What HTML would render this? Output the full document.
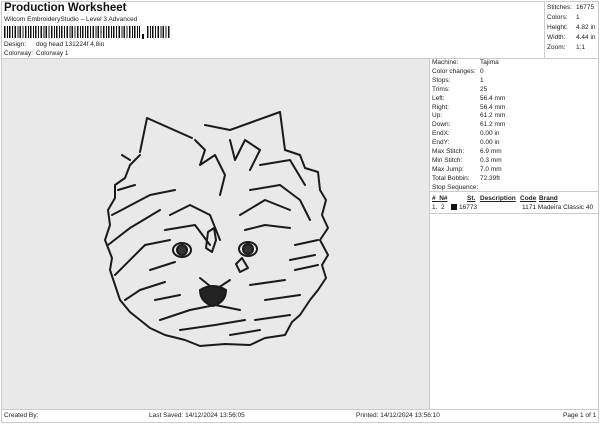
<!DOCTYPE html>
<html><head><meta charset="utf-8"><style>
*{margin:0;padding:0;box-sizing:border-box}
body{width:600px;height:424px;background:#fff;font-family:"Liberation Sans",sans-serif;color:#222;position:relative;overflow:hidden;font-size:7px}
.a{position:absolute;white-space:nowrap}
.f{border:1px solid #ccc;position:absolute}
</style></head><body>
<div class="f" style="left:1px;top:1px;width:598px;height:422px"></div>
<div class="a" style="left:4px;top:2px;font-size:11.5px;font-weight:bold;color:#111">Production Worksheet</div>
<div class="a" style="left:4px;top:16px;font-size:6.5px">Wilcom EmbroideryStudio – Level 3 Advanced</div>
<div class="a" style="left:4px;top:26px;width:136px;height:12px;background:repeating-linear-gradient(90deg,#111 0 1.5px,#fff 1.5px 3px,#111 3px 4px,#fff 4px 5.2px)"></div>
<div class="a" style="left:142px;top:34px;width:2px;height:5px;background:#111"></div>
<div class="a" style="left:147px;top:26px;width:24px;height:12px;background:repeating-linear-gradient(90deg,#111 0 1.5px,#fff 1.5px 3px,#111 3px 4px,#fff 4px 5.2px)"></div>
<div class="a" style="left:4px;top:41px;font-size:6.5px">Design:</div>
<div class="a" style="left:36px;top:41px;font-size:6.5px">dog head 131224f 4,8in</div>
<div class="a" style="left:4px;top:50px;font-size:6.5px">Colorway:</div>
<div class="a" style="left:36px;top:50px;font-size:6.5px">Colorway 1</div>
<div class="a" style="left:544px;top:1px;width:1px;height:57px;background:#ccc"></div>
<div class="a" style="left:547px;top:3px;font-size:6.5px;line-height:10px">Stitches:<br>Colors:<br>Height:<br>Width:<br>Zoom:</div>
<div class="a" style="left:576px;top:3px;font-size:6.5px;line-height:10px">16775<br>1<br>4.82 in<br>4.44 in<br>1:1</div>
<div class="a" style="left:1px;top:58px;width:598px;height:1px;background:#ccc"></div>
<div class="a" style="left:2px;top:59px;width:427px;height:350px;background:#e9e9e9"></div>
<div class="a" style="left:429px;top:59px;width:1px;height:350px;background:#ccc"></div>
<div class="a" style="left:432px;top:59px;font-size:6.5px;line-height:8.9px">Machine:<br>Color changes:<br>Stops:<br>Trims:<br>Left:<br>Right:<br>Up:<br>Down:<br>EndX:<br>EndY:<br>Max Stitch:<br>Min Stitch:<br>Max Jump:<br>Total Bobbin:<br>Stop Sequence:</div>
<div class="a" style="left:480px;top:59px;font-size:6.5px;line-height:8.9px">Tajima<br>0<br>1<br>25<br>56.4 mm<br>56.4 mm<br>61.2 mm<br>61.2 mm<br>0.00 in<br>0.00 in<br>6.9 mm<br>0.3 mm<br>7.0 mm<br>72.39ft</div>
<div class="a" style="left:430px;top:191px;width:169px;height:1px;background:#ccc"></div>
<div class="a" style="left:432px;top:195px;font-size:6.5px;font-weight:bold;text-decoration:underline">#&nbsp; N#</div>
<div class="a" style="left:467px;top:195px;font-size:6.5px;font-weight:bold;text-decoration:underline">St.</div>
<div class="a" style="left:480px;top:195px;font-size:6.5px;font-weight:bold;text-decoration:underline">Description</div>
<div class="a" style="left:520px;top:195px;font-size:6.5px;font-weight:bold;text-decoration:underline">Code</div>
<div class="a" style="left:539px;top:195px;font-size:6.5px;font-weight:bold;text-decoration:underline">Brand</div>
<div class="a" style="left:432px;top:204px;font-size:6.5px">1.&nbsp; 2</div>
<div class="a" style="left:451px;top:204px;width:6px;height:6px;background:#111"></div>
<div class="a" style="left:459px;top:204px;font-size:6.5px">16773</div>
<div class="a" style="left:522px;top:204px;font-size:6.5px">1171 Madeira Classic 40</div>
<div class="a" style="left:430px;top:213px;width:169px;height:1px;background:#ccc"></div>
<div class="a" style="left:1px;top:409px;width:598px;height:1px;background:#ccc"></div>
<div class="a" style="left:4px;top:412px;font-size:6.5px">Created By:</div>
<div class="a" style="left:149px;top:412px;font-size:6.5px">Last Saved: 14/12/2024 13:56:05</div>
<div class="a" style="left:356px;top:412px;font-size:6.5px">Printed: 14/12/2024 13:56:10</div>
<div class="a" style="left:563px;top:412px;font-size:6.5px">Page 1 of 1</div>
<svg class="a" style="left:0;top:0" width="600" height="424" fill="none" stroke="#1a1a1a" stroke-width="2" stroke-linejoin="round" stroke-linecap="round">
<path d="M140 152 L147 118 L192 138 M205 125 L230 130 L280 112 L285 150 L300 155 L305 168 L318 172 L320 190 L326 200 L322 215 L328 228 L320 240 L328 255 L322 265 L326 278 L318 290 L310 300 L300 315 L292 322 L285 335 L265 338 L250 345 L225 344 L200 346 L185 340 L165 335 L150 328 L140 320 L130 312 L120 300 L115 285 L110 270 L112 258 L105 240 L110 225 L108 210 L115 198 L115 185 L125 178 L130 165 L140 155"/>
<path d="M130 160 L122 155 M118 190 L135 185 M112 215 L150 195 L175 190 M108 245 L130 228 L160 210 M115 275 L145 245 M125 300 L140 290 M155 300 L180 295 M160 320 L190 310 M180 330 L215 325 L245 320 M230 335 L260 330 M255 320 L290 315 M265 300 L300 295 M250 285 L285 280 M295 270 L318 265"/>
<path d="M195 140 L205 150 L200 165 L215 155 L225 175 L220 195 M230 140 L235 160 L245 140 L260 150 L250 170 M260 165 L290 160 L305 185 M250 190 L280 185 L300 200 L310 220 M240 215 L265 200 L290 210 M245 230 L265 225 L290 228 M170 215 L190 205 L210 215 L220 240 M165 230 L195 225 L210 245"/>
<path d="M145 245 L170 240 M150 270 L175 262 M140 290 L165 282 M295 245 L318 240 M290 260 L315 255"/>
<path d="M208 232 L214 228 L216 240 L212 252 L206 248 Z M236 264 L242 258 L248 268 L240 272 Z"/>
<path d="M200 278 L215 290 L230 280 M190 310 L215 305 L240 310"/>
<ellipse cx="182" cy="250" rx="9" ry="7"/>
<circle cx="182" cy="250" r="5" fill="#333"/>
<ellipse cx="248" cy="249" rx="9" ry="7"/>
<circle cx="248" cy="249" r="5" fill="#333"/>
<path d="M200 290 Q213 282 226 290 Q226 302 213 306 Q200 302 200 290 Z" fill="#222"/>
</svg>
</body></html>
